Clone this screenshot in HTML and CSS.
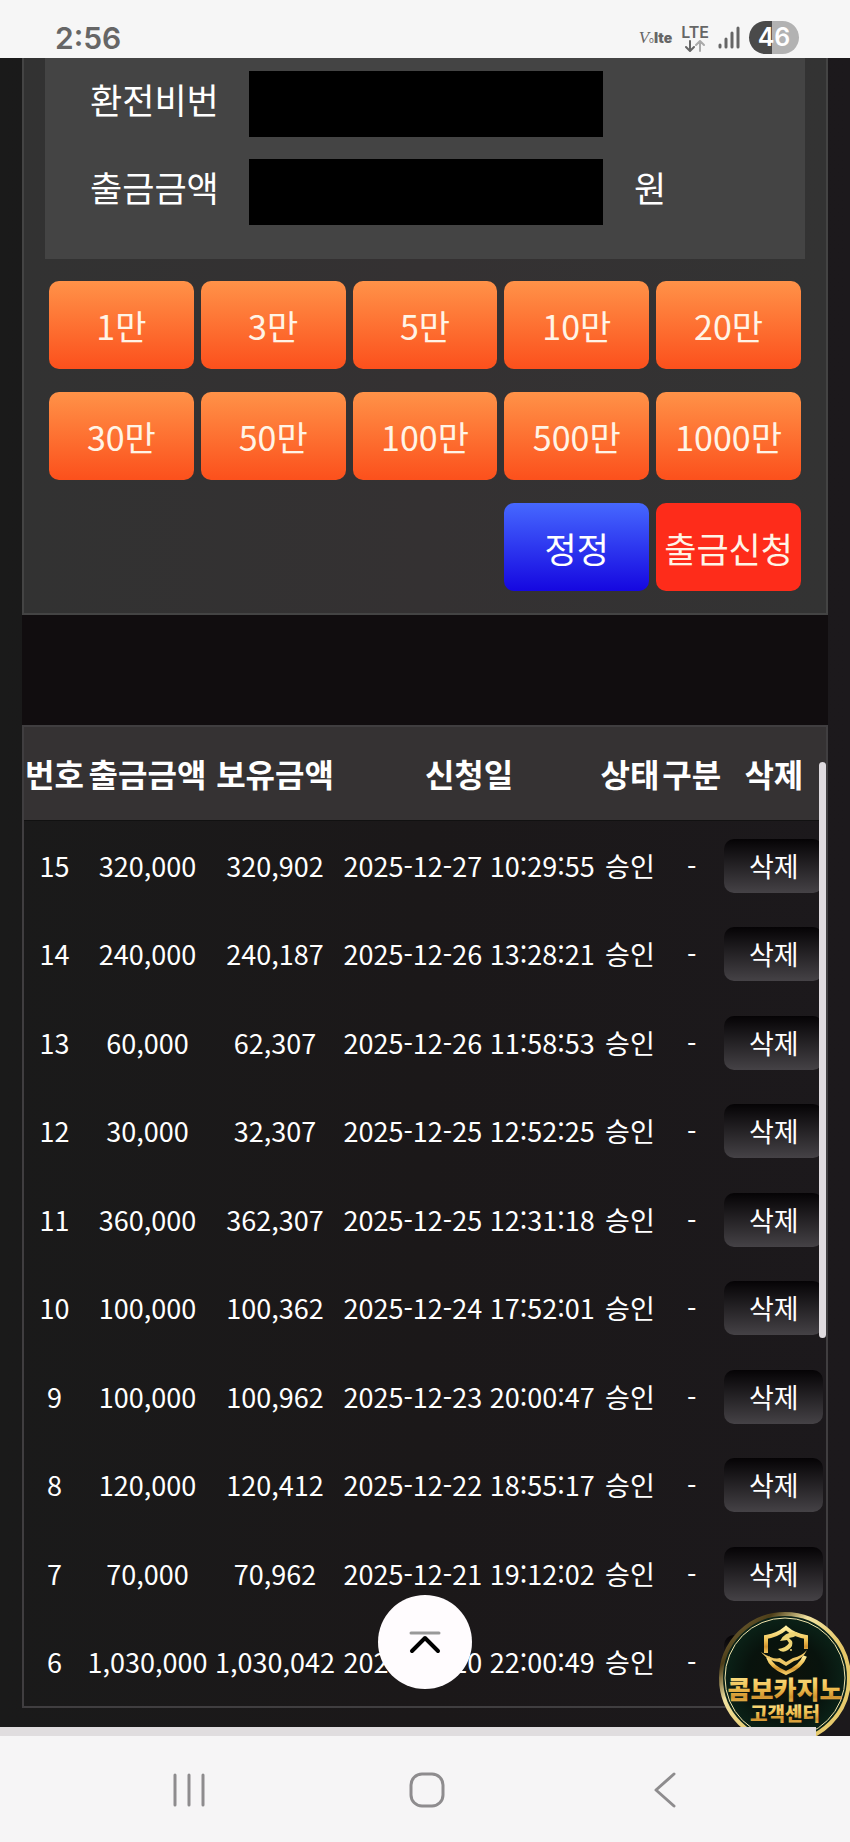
FILE: index.html
```html
<!DOCTYPE html>
<html lang="ko">
<head>
<meta charset="utf-8">
<meta name="viewport" content="width=device-width, initial-scale=1">
<title>출금신청</title>
<link rel="stylesheet" href="styles.css">
</head>
<body>
<header class="status-bar">
  <time class="clock">2:56</time>
  <div class="status-icons">
    <span class="volte"><i>V</i><small>o</small><b>lte</b></span>
    <span class="network">LTE
      <svg width="20" height="12" viewBox="0 0 20 12" fill="none" stroke-width="2" stroke-linecap="round" stroke-linejoin="round">
        <path d="M5 1v9.500M1 7l4 4 4-4" stroke="#666"/>
        <path d="M15 11V1.500M11 5l4-4 4 4" stroke="#aaa"/>
      </svg>
    </span>
    <svg class="signal" width="22" height="23" viewBox="0 0 22 23" stroke="#666" stroke-width="3" stroke-linecap="round">
      <path d="M2 19v2M8 13v8M14 7v14M20 2v19"/>
    </svg>
    <span class="battery">46</span>
  </div>
</header>

<main class="page">
  <div class="content">
    <form class="withdraw">
      <div class="fields">
        <label for="pin">환전비번</label>
        <input id="pin" type="password">
        <span></span>
        <label for="amount">출금금액</label>
        <input id="amount" type="text">
        <span class="unit">원</span>
      </div>
      <div class="amounts">
        <button type="button">1만</button>
        <button type="button">3만</button>
        <button type="button">5만</button>
        <button type="button">10만</button>
        <button type="button">20만</button>
        <button type="button">30만</button>
        <button type="button">50만</button>
        <button type="button">100만</button>
        <button type="button">500만</button>
        <button type="button">1000만</button>
        <button type="reset" class="reset">정정</button>
        <button type="submit" class="submit">출금신청</button>
      </div>
    </form>

    <section class="history">
      <table>
        <colgroup>
          <col class="c-no"><col class="c-amount"><col class="c-balance"><col class="c-date"><col class="c-state"><col class="c-type"><col class="c-delete">
        </colgroup>
        <thead>
          <tr><th>번호</th><th>출금금액</th><th>보유금액</th><th>신청일</th><th>상태</th><th>구분</th><th>삭제</th></tr>
        </thead>
        <tbody>
          <tr><td>15</td><td>320,000</td><td>320,902</td><td>2025-12-27 10:29:55</td><td>승인</td><td>-</td><td><button type="button">삭제</button></td></tr>
          <tr><td>14</td><td>240,000</td><td>240,187</td><td>2025-12-26 13:28:21</td><td>승인</td><td>-</td><td><button type="button">삭제</button></td></tr>
          <tr><td>13</td><td>60,000</td><td>62,307</td><td>2025-12-26 11:58:53</td><td>승인</td><td>-</td><td><button type="button">삭제</button></td></tr>
          <tr><td>12</td><td>30,000</td><td>32,307</td><td>2025-12-25 12:52:25</td><td>승인</td><td>-</td><td><button type="button">삭제</button></td></tr>
          <tr><td>11</td><td>360,000</td><td>362,307</td><td>2025-12-25 12:31:18</td><td>승인</td><td>-</td><td><button type="button">삭제</button></td></tr>
          <tr><td>10</td><td>100,000</td><td>100,362</td><td>2025-12-24 17:52:01</td><td>승인</td><td>-</td><td><button type="button">삭제</button></td></tr>
          <tr><td>9</td><td>100,000</td><td>100,962</td><td>2025-12-23 20:00:47</td><td>승인</td><td>-</td><td><button type="button">삭제</button></td></tr>
          <tr><td>8</td><td>120,000</td><td>120,412</td><td>2025-12-22 18:55:17</td><td>승인</td><td>-</td><td><button type="button">삭제</button></td></tr>
          <tr><td>7</td><td>70,000</td><td>70,962</td><td>2025-12-21 19:12:02</td><td>승인</td><td>-</td><td><button type="button">삭제</button></td></tr>
          <tr><td>6</td><td>1,030,000</td><td>1,030,042</td><td>2025-12-20 22:00:49</td><td>승인</td><td>-</td><td><button type="button" aria-label="삭제"></button></td></tr>
        </tbody>
      </table>
    </section>
  </div>

  <div class="scrollbar"></div>
  <a class="support" href="#support" aria-label="콤보카지노 고객센터">
    <svg width="132" height="132" viewBox="0 0 132 132">
      <defs>
        <linearGradient id="gold" x1="0" y1="0" x2="0" y2="1">
          <stop offset="0" stop-color="#fff0a0"/><stop offset=".5" stop-color="#f0c052"/><stop offset=".75" stop-color="#d1932f"/><stop offset="1" stop-color="#f0c860"/>
        </linearGradient>
        <linearGradient id="ring" x1="0" y1="0" x2="1" y2="1">
          <stop offset="0" stop-color="#8a7a48"/><stop offset=".2" stop-color="#4c3d18"/><stop offset=".35" stop-color="#f1e2a0"/><stop offset=".6" stop-color="#e5c768"/><stop offset="1" stop-color="#e8cc70"/>
        </linearGradient>
        <radialGradient id="disc">
          <stop offset="0" stop-color="#0d120a"/><stop offset=".6" stop-color="#08130d"/><stop offset="1" stop-color="#0b2419"/>
        </radialGradient>
      </defs>
      <circle cx="66" cy="66" r="64" fill="url(#disc)" stroke="url(#ring)" stroke-width="4"/>
      <circle cx="66" cy="66" r="60" fill="none" stroke="#f3e6ad" stroke-width="1"/>
      <path d="M47 41V25Q59 23 67 16Q75 23 87 25V37" fill="none" stroke="url(#gold)" stroke-width="4"/>
      <path d="M49 45Q52 55 67 61Q82 55 86 44" fill="none" stroke="url(#gold)" stroke-width="4"/>
      <path d="M42 40Q54 48 61 46L67 50L74 46Q83 44 88 38Q84 47 75 49L67 54L60 50Q49 49 42 40Z" fill="#efc766"/>
      <path d="M77 20Q65 20 61 29L68 28L70 31Q67 36 59 37Q63 42 69 38Q75 34 73 29L70 26Q76 25 80 22Z" fill="#efd574"/>
      <circle cx="72" cy="38" r="1" fill="#efd574"/>
      <text class="badge-title" x="66" y="87" text-anchor="middle" fill="url(#gold)">콤보카지노</text>
      <text class="badge-subtitle" x="66" y="109" text-anchor="middle" fill="url(#gold)">고객센터</text>
    </svg>
  </a>
  <button class="to-top" type="button" aria-label="맨 위로">
    <svg width="32" height="24" viewBox="0 0 32 24" fill="none" stroke-linecap="round" stroke-linejoin="round">
      <path d="M2 3h28" stroke="#999" stroke-width="3"/>
      <path d="M3 21L16 8L29 21" stroke="#000" stroke-width="4"/>
    </svg>
  </button>
  <div class="load-progress"></div>
</main>

<nav class="system-nav">
  <button type="button" aria-label="최근 앱">
    <svg width="34" height="36" viewBox="0 0 34 36" stroke="#8e8c8e" stroke-width="3" stroke-linecap="round"><path d="M3 3v30M17 3v30M31 3v30"/></svg>
  </button>
  <button type="button" aria-label="홈">
    <svg width="36" height="36" viewBox="0 0 36 36" fill="none" stroke="#8e8c8e" stroke-width="3"><rect x="2" y="2" width="32" height="32" rx="11"/></svg>
  </button>
  <button type="button" aria-label="뒤로">
    <svg width="24" height="36" viewBox="0 0 24 36" fill="none" stroke="#8e8c8e" stroke-width="3" stroke-linecap="round" stroke-linejoin="round"><path d="M21 2L3 18L21 34"/></svg>
  </button>
</nav>
</body>
</html>
```

FILE: styles.css
```css
* {
  box-sizing: border-box;
}

body {
  margin: 0;
  min-height: 100vh;
  display: flex;
  flex-direction: column;
  background: #f6f5f6;
  color: #fff;
  font-family: "Noto Sans CJK KR", "Noto Sans", sans-serif;
}

button,
input {
  margin: 0;
  padding: 0;
  border: 0;
  color: inherit;
  font: inherit;
}

.status-bar {
  display: flex;
  justify-content: space-between;
  align-items: flex-end;
  height: 58px;
  padding: 0 51px 4px 55px;
  background: #f6f6f6;
  color: #666;
  font-family: Inter, Roboto, sans-serif;
}

.clock {
  font-size: 30px;
  font-weight: 600;
  line-height: 32px;
}

.status-icons {
  display: flex;
  align-items: center;
  gap: 9px;
}

.volte {
  display: flex;
  align-items: baseline;
  padding-top: 3px;
  font-size: 17px;
  line-height: 20px;
}

.volte i {
  font-family: "Liberation Serif", serif;
}

.volte small {
  font-size: 8px;
}

.volte b {
  font-size: 14px;
  font-weight: 900;
}

.network {
  display: flex;
  flex-direction: column;
  align-items: center;
  font-size: 16px;
  font-weight: 600;
  line-height: 16px;
}

.battery {
  width: 50px;
  height: 33px;
  border-radius: 17px;
  background: linear-gradient(90deg, #4a4a4a 46%, #b2b2b2 46%);
  color: #fff;
  font-size: 25px;
  font-weight: 600;
  line-height: 33px;
  text-align: center;
}

.page {
  position: relative;
  flex: 1;
  display: flex;
  flex-direction: column;
  padding: 0 22px;
  overflow: hidden;
  background: linear-gradient(90deg, #1a1a1a, #1b1819 50%, #1c191c);
}

.content {
  flex: 1;
  display: flex;
  flex-direction: column;
}

.withdraw {
  border: 2px solid #444;
  border-top: 0;
  background: linear-gradient(90deg, #323232, #343132 50%, #333);
}

.fields {
  display: grid;
  grid-template-columns: 159fr 354fr 202fr;
  row-gap: 22px;
  margin: 0 21px;
  padding: 13px 0 34px 45px;
  background: #444;
  font-size: 35px;
  line-height: 56px;
}

.fields input {
  width: 100%;
  height: 66px;
  background: #000;
}

.unit {
  padding-left: 31px;
}

.amounts {
  display: grid;
  grid-template-columns: repeat(5, 1fr);
  grid-auto-rows: 88px;
  gap: 23px 7px;
  padding: 22px 25px;
}

.amounts button {
  border-radius: 10px;
  background: linear-gradient(#ff9248, #fc501c);
  color: #fff4e6;
  font-size: 34px;
  white-space: nowrap;
}

.amounts .reset {
  grid-column: 4;
  background: linear-gradient(#4668ff, #1507e0);
  color: #fff;
  font-size: 35px;
}

.amounts .submit {
  background: #fe2c1a;
  font-size: 35px;
}

.history {
  flex: 1;
  border-top: 110px solid #110d0f;
  padding-bottom: 26px;
}

.history table {
  width: 100%;
  border: 2px solid #403e40;
  border-spacing: 0;
  table-layout: fixed;
  text-align: center;
}

.c-no { width: 7.6%; }
.c-amount { width: 15.6%; }
.c-balance { width: 16.2%; }
.c-date { width: 32.2%; }
.c-state { width: 7.9%; }
.c-type { width: 7.5%; }
.c-delete { width: 13%; }

.history th,
.history td {
  padding: 0;
  white-space: nowrap;
}

.history th {
  height: 94px;
  padding-bottom: 2px;
  border-bottom: 1px solid #111;
  background: #353233;
  font-size: 32px;
  font-weight: 700;
  line-height: 48px;
}

.history tbody tr {
  height: 89px;
}

.history tbody tr:nth-child(even) {
  height: 88px;
}

.history td {
  font-size: 27px;
  line-height: 40px;
}

.history td button {
  width: 99px;
  height: 54px;
  border-radius: 10px;
  background: linear-gradient(#050305, #454246);
  vertical-align: middle;
}

.scrollbar {
  position: absolute;
  top: 704px;
  right: 24px;
  width: 7px;
  height: 576px;
  border-radius: 4px;
  background: #dfdbdf;
}

.support {
  position: absolute;
  right: -1px;
  bottom: -8px;
  width: 132px;
  height: 132px;
}

.badge-title {
  font-size: 25px;
  font-weight: 900;
}

.badge-subtitle {
  font-size: 19px;
  font-weight: 900;
}

.to-top {
  position: absolute;
  bottom: 47px;
  left: calc(50% - 47px);
  display: grid;
  place-items: center;
  width: 94px;
  height: 94px;
  border-radius: 50%;
  background: #fffcfe;
}

.load-progress {
  position: absolute;
  bottom: 0;
  left: 0;
  width: 96%;
  height: 9px;
  background: #e0dddf;
}

.system-nav {
  display: grid;
  grid-template-columns: repeat(3, 1fr);
  height: 106px;
  padding: 2px 66px 0 70px;
  background: #f6f5f6;
}

.system-nav button {
  display: grid;
  place-items: center;
  background: none;
}
```
